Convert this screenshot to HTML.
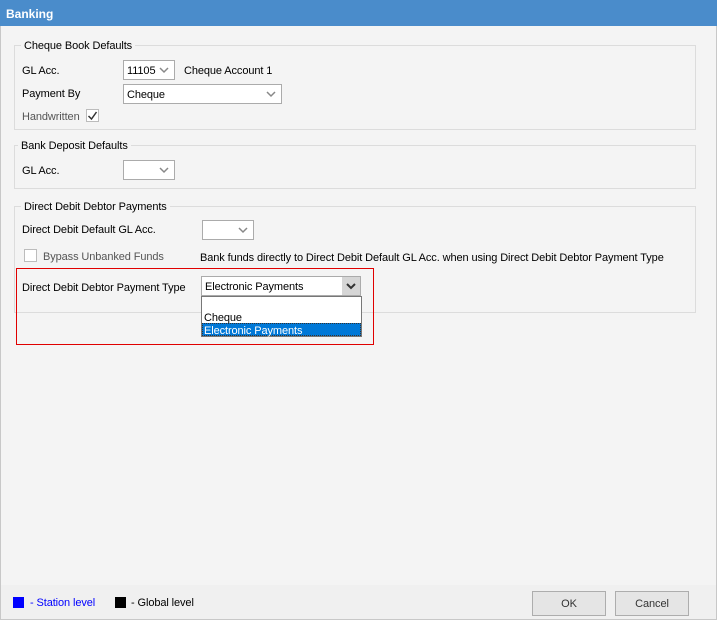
<!DOCTYPE html>
<html><head><style>
*{box-sizing:border-box;margin:0;padding:0}
body{width:717px;height:620px;background:#f4f4f4;font-family:"Liberation Sans",sans-serif;font-size:11px;letter-spacing:-0.1px;color:#000;position:relative;overflow:hidden}
.a{position:absolute;white-space:nowrap}
.title{left:0;top:0;width:717px;height:26px;background:#4a8ccb;color:#fff;font-weight:bold;font-size:12px;padding:7px 0 0 6px;letter-spacing:0}
.win{left:0;top:26px;width:717px;height:594px;border:1px solid #c8c8c8;border-top:none}
.grp{border:1px solid #dcdcdc}
.lg{background:#f4f4f4;padding:0 3px}
.cb{background:#fff;border:1px solid #ababab;height:20px;padding:4px 0 0 3px}
.arr{position:absolute;right:5px;top:4px;width:10px;height:10px}
.chk{width:13px;height:13px;border:1px solid #bcbcbc;background:#fff}
.btn{border:1px solid #adadad;background:#e5e5e5;text-align:center;padding-top:6px;height:25px;color:#333}
</style></head><body>
<div class="a title">Banking</div>
<div class="a win"></div>

<div class="a grp" style="left:14px;top:45px;width:682px;height:85px"></div>
<div class="a lg" style="left:21px;top:40px">Cheque Book Defaults</div>
<div class="a" style="left:22px;top:65px">GL Acc.</div>
<div class="a cb" style="left:123px;top:60px;width:52px">11105<svg class="arr" viewBox="0 0 10 10"><path d="M1 3l4 4 4-4" stroke="#888" fill="none" stroke-width="1.5"/></svg></div>
<div class="a" style="left:184px;top:65px">Cheque Account 1</div>
<div class="a" style="left:22px;top:88px">Payment By</div>
<div class="a cb" style="left:123px;top:84px;width:159px">Cheque<svg class="arr" viewBox="0 0 10 10"><path d="M1 3l4 4 4-4" stroke="#888" fill="none" stroke-width="1.5"/></svg></div>
<div class="a" style="left:22px;top:111px;color:#555">Handwritten</div>
<div class="a chk" style="left:86px;top:109px"><svg width="11" height="11" viewBox="0 0 11 11" style="position:absolute;left:0;top:0"><path d="M1.5 6l3 3 5-7" stroke="#333" fill="none" stroke-width="1.5"/></svg></div>

<div class="a grp" style="left:14px;top:145px;width:682px;height:44px"></div>
<div class="a lg" style="left:18px;top:140px">Bank Deposit Defaults</div>
<div class="a" style="left:22px;top:165px">GL Acc.</div>
<div class="a cb" style="left:123px;top:160px;width:52px"><svg class="arr" viewBox="0 0 10 10"><path d="M1 3l4 4 4-4" stroke="#888" fill="none" stroke-width="1.5"/></svg></div>

<div class="a grp" style="left:14px;top:206px;width:682px;height:107px"></div>
<div class="a lg" style="left:21px;top:201px">Direct Debit Debtor Payments</div>
<div class="a" style="left:22px;top:224px">Direct Debit Default GL Acc.</div>
<div class="a cb" style="left:202px;top:220px;width:52px"><svg class="arr" viewBox="0 0 10 10"><path d="M1 3l4 4 4-4" stroke="#888" fill="none" stroke-width="1.5"/></svg></div>
<div class="a chk" style="left:24px;top:249px"></div>
<div class="a" style="left:43px;top:251px;color:#555">Bypass Unbanked Funds</div>
<div class="a" style="left:200px;top:252px">Bank funds directly to Direct Debit Default GL Acc. when using Direct Debit Debtor Payment Type</div>

<div class="a" style="left:16px;top:268px;width:358px;height:77px;border:1px solid #e00000"></div>
<div class="a" style="left:22px;top:282px">Direct Debit Debtor Payment Type</div>
<div class="a cb" style="left:201px;top:276px;width:160px">Electronic Payments<div class="a" style="right:0;top:0;width:18px;height:18px;background:#d6d6d6"><svg style="position:absolute;left:4px;top:4px" width="10" height="10" viewBox="0 0 10 10"><path d="M1 3l4 4 4-4" stroke="#333" fill="none" stroke-width="2"/></svg></div></div>
<div class="a" style="left:201px;top:296px;width:161px;height:41px;background:#fff;border:1px solid #777"></div>
<div class="a" style="left:204px;top:312px">Cheque</div>
<div class="a" style="left:202px;top:323px;width:159px;height:13px;background:#0078d7;color:#fff;padding:1px 0 0 1px;border:1px dotted #333;line-height:12px">Electronic Payments</div>

<div class="a" style="left:1px;top:585px;width:715px;height:34px;background:#f0f0f0"></div>
<div class="a" style="left:13px;top:597px;width:11px;height:11px;background:#0000ff"></div>
<div class="a" style="left:30px;top:597px;color:#0000ff">- Station level</div>
<div class="a" style="left:115px;top:597px;width:11px;height:11px;background:#000"></div>
<div class="a" style="left:131px;top:597px">- Global level</div>
<div class="a btn" style="left:532px;top:591px;width:74px">OK</div>
<div class="a btn" style="left:615px;top:591px;width:74px">Cancel</div>
</body></html>
